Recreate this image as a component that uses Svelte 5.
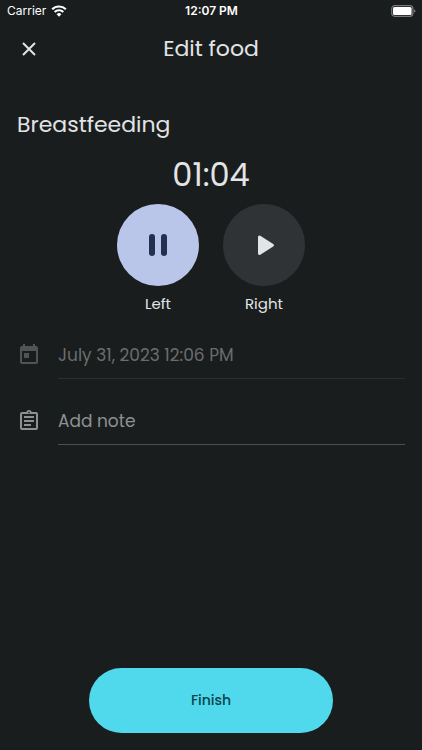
<script lang="ts">
	type Side = 'left' | 'right';

	let active: Side | null = 'left';
	let seconds = 64;
	let startedAt = 'July 31, 2023 12:06 PM';
	let note = '';

	const sides: { id: Side; label: string }[] = [
		{ id: 'left', label: 'Left' },
		{ id: 'right', label: 'Right' }
	];

	const pad = (n: number) => String(n).padStart(2, '0');

	$: elapsed = `${pad(Math.floor(seconds / 60))}:${pad(seconds % 60)}`;

	// only one side can run at a time
	const toggle = (side: Side) => {
		active = active === side ? null : side;
	};
</script>

<div class="screen">
	<div class="status">
		<div class="carrier">
			<span>Carrier</span>
			<svg width="16" height="12" viewBox="0 0 16 12" aria-hidden="true">
				<path d="M1.200 4.300a9.700 9.700 0 0 1 13.600 0" />
				<path d="M3.700 7a6.100 6.100 0 0 1 8.600 0" />
				<path class="dot" d="M8 11.800 5.600 9.300a3.400 3.400 0 0 1 4.800 0Z" />
			</svg>
		</div>
		<span class="clock">12:07 PM</span>
		<svg class="battery" width="25" height="12" viewBox="0 0 25 12" aria-hidden="true">
			<rect class="shell" x="0.7" y="0.7" width="21.2" height="10.6" rx="3" />
			<rect x="2" y="2" width="18.6" height="8" rx="1.5" />
			<path class="cap" d="M23 4.2q1.5.5 1.5 1.8T23 7.8Z" />
		</svg>
	</div>

	<header>
		<button class="close" aria-label="Close">
			<svg width="24" height="24" viewBox="0 0 24 24">
				<path d="M6 6l12 12M18 6L6 18" />
			</svg>
		</button>
		<h1>Edit food</h1>
	</header>

	<main>
		<h2>Breastfeeding</h2>
		<div class="elapsed">{elapsed}</div>

		<div class="sides">
			{#each sides as side}
				<div class="side">
					<button
						id={side.id}
						class:active={active === side.id}
						aria-pressed={active === side.id}
						on:click={() => toggle(side.id)}
					>
						{#if active === side.id}
							<svg width="40" height="40" viewBox="0 0 40 40">
								<rect x="11" y="9" width="6" height="22" rx="3" />
								<rect x="23" y="9" width="6" height="22" rx="3" />
							</svg>
						{:else}
							<svg width="40" height="40" viewBox="0 0 40 40">
								<path
									d="M14 12v16.500a1.500 1.500 0 0 0 2.300 1.300l12.900-8.200a1.600 1.600 0 0 0 0-2.700l-12.900-8.200a1.500 1.500 0 0 0-2.300 1.300Z"
								/>
							</svg>
						{/if}
					</button>
					<label for={side.id}>{side.label}</label>
				</div>
			{/each}
		</div>

		<div class="field disabled">
			<label for="started" aria-label="Start time">
				<svg width="24" height="24" viewBox="0 0 24 24">
					<path
						d="M19 3h-1V1h-2v2H8V1H6v2H5a2 2 0 0 0-2 2v14a2 2 0 0 0 2 2h14a2 2 0 0 0 2-2V5a2 2 0 0 0-2-2Zm0 16H5V8h14v11ZM7 10h5v5H7Z"
					/>
				</svg>
			</label>
			<input id="started" type="text" bind:value={startedAt} disabled />
		</div>

		<div class="field">
			<label for="note" aria-label="Note">
				<svg width="24" height="24" viewBox="0 0 24 24">
					<path
						fill-rule="evenodd"
						d="M19 3h-4.200a3 3 0 0 0-5.600 0H5a2 2 0 0 0-2 2v14a2 2 0 0 0 2 2h14a2 2 0 0 0 2-2V5a2 2 0 0 0-2-2Zm-7-.2a.8.8 0 1 1 0 1.600.8.8 0 0 1 0-1.600ZM5 5h14v14H5ZM7 7h10v2H7ZM7 11h10v2H7ZM7 15h7v2H7Z"
					/>
				</svg>
			</label>
			<input id="note" type="text" placeholder="Add note" bind:value={note} />
		</div>
	</main>

	<footer>
		<button class="finish">Finish</button>
	</footer>
</div>

<style>
	:global(body) {
		margin: 0;
		background: #1a1d1e;
	}

	.screen {
		display: flex;
		flex-direction: column;
		box-sizing: border-box;
		min-height: 100vh;
		background: #1a1d1e;
		color: #e2e4e5;
		font-family: Poppins, Inter, sans-serif;
	}

	button {
		padding: 0;
		border: none;
		background: none;
		color: inherit;
		font: inherit;
		cursor: pointer;
	}

	svg {
		display: block;
		fill: currentColor;
	}

	.status {
		display: grid;
		grid-template-columns: 1fr auto 1fr;
		align-items: center;
		height: 21px;
		padding: 0 6px 0 7px;
		color: #fff;
		font-family: Inter, sans-serif;
		font-size: 12px;
	}

	.carrier {
		display: flex;
		align-items: center;
		gap: 5px;
	}

	.carrier path {
		fill: none;
		stroke: currentColor;
		stroke-width: 2.2;
	}

	.carrier .dot {
		fill: currentColor;
		stroke: none;
	}

	.clock {
		font-weight: 600;
	}

	.battery {
		justify-self: end;
	}

	.battery .shell {
		fill: none;
		stroke: #77797a;
		stroke-width: 1.2;
	}

	.battery .cap {
		fill: #77797a;
	}

	header {
		display: grid;
		grid-template-columns: 24px 1fr 24px;
		align-items: center;
		height: 56px;
		padding: 0 17px;
	}

	.close path {
		fill: none;
		stroke: currentColor;
		stroke-width: 2;
	}

	h1,
	h2 {
		margin: 0;
		font-size: 22px;
		font-weight: 400;
		line-height: 32px;
	}

	h1 {
		text-align: center;
	}

	main {
		flex: 1;
		padding: 32px 17px 0;
	}

	.elapsed {
		padding: 12px 0 7px;
		font-size: 32px;
		line-height: 44px;
		text-align: center;
	}

	.sides {
		display: flex;
		justify-content: center;
		gap: 24px;
	}

	.side {
		display: flex;
		flex-direction: column;
		align-items: center;
		gap: 8px;
		font-size: 15px;
		line-height: 20px;
	}

	.side button {
		display: grid;
		place-items: center;
		width: 82px;
		height: 82px;
		border-radius: 50%;
		background: #303336;
	}

	.side .active {
		background: #bac5ea;
		color: #23304f;
	}

	.field {
		display: flex;
		align-items: center;
		gap: 17px;
		height: 66px;
		color: #8d9192;
	}

	.disabled {
		margin-top: 8px;
		color: #515455;
	}

	input {
		flex: 1;
		box-sizing: border-box;
		min-width: 0;
		height: 48px;
		padding: 0;
		border: none;
		border-bottom: 1px solid #4b4f50;
		border-radius: 0;
		outline: none;
		background: none;
		color: inherit;
		font: inherit;
		font-size: 17px;
	}

	input::placeholder {
		color: inherit;
		opacity: 1;
	}

	.disabled input {
		border-color: #2b2e2f;
		color: #6a6d6e;
	}

	footer {
		display: flex;
		justify-content: center;
		padding: 16px 16px 17px;
	}

	.finish {
		width: 58%;
		min-width: 244px;
		height: 65px;
		border-radius: 33px;
		background: #50d8ec;
		color: #0a444d;
		font-size: 14px;
		font-weight: 500;
	}
</style>
